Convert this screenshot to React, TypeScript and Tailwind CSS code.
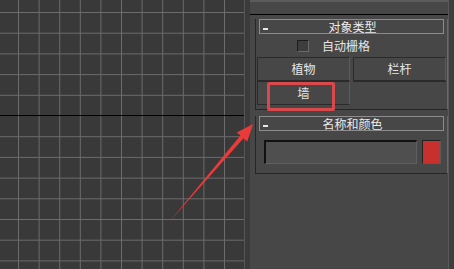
import React from 'react';

// viewport grid: spacing measured off the reference
const vLines = Array.from({ length: 12 }, (_, i) => 18.5 + i * 20.6);
const hLines = Array.from({ length: 13 }, (_, i) => 12.5 + i * 20.7);

const font = "font-['Noto_Sans_CJK_SC','Noto_Sans',sans-serif]";

const RolloutHeader = ({ title }: { title: string }) => (
  <div className="mx-[3px] -mt-[8px] h-[15px] border border-[#8c8c8c] bg-[#474747] flex items-center">
    <div className="w-[5px] h-[2px] bg-[#e6e6e6] ml-[3px] self-end mb-[3px]" />
    <span className="flex-1 text-center text-[12px] leading-none text-[#ececec] pr-[6px]">{title}</span>
  </div>
);

const ToolButton = ({ label }: { label?: string }) => (
  <div className="h-[24px] border border-[#2a2a2a] border-r-[#5a5a5a] border-b-[#2a2a2a] bg-[#474747] flex items-center justify-center text-[12px] text-[#e6e6e6]">
    {label}
  </div>
);

export default function App() {
  return (
    <div className={`w-[454px] h-[269px] flex relative overflow-hidden bg-[#474747] ${font}`}>
      {/* Viewport */}
      <div className="w-[244px] h-full bg-[#393939]">
        <svg width="244" height="269" className="block">
          {vLines.map((x) => (
            <line key={`v${x}`} x1={x} y1={0} x2={x} y2={269} stroke="#6c6c6c" strokeWidth={1} />
          ))}
          {hLines.map((y, i) =>
            i === 5 ? null : <line key={`h${y}`} x1={0} y1={y} x2={244} y2={y} stroke="#6c6c6c" strokeWidth={1} />
          )}
          <line x1={0} y1={115.5} x2={244} y2={115.5} stroke="#000" strokeWidth={1.2} />
        </svg>
      </div>
      <div className="w-[6px] h-full bg-[#3b3b3b] border-l border-[#555555]" />

      {/* Command panel */}
      <div className="w-[198px] h-full flex flex-col">
        <div className="h-[14px] border-t-2 border-[#5c5c5c]" />
        <div className="border-t border-black">
          {/* Object Type rollout */}
          <div className="mt-[12px] ml-[5px] w-[193px] border-l border-b border-r border-[#262626] border-r-[#6a6a6a] pb-[4px]">
            <RolloutHeader title="对象类型" />
            <div className="mt-[5px] h-[13px] pl-[41px] flex items-center gap-[13px]">
              <div className="w-[12px] h-[12px] border border-[#1c1c1c] border-r-[#6a6a6a] border-b-[#6a6a6a] bg-[#3d3d3d]" />
              <span className="text-[12px] leading-none text-[#e6e6e6]">自动栅格</span>
            </div>
            <div className="mt-[5px] px-[1px] grid grid-cols-2 gap-x-[3px]">
              <ToolButton label="植物" />
              <ToolButton label="栏杆" />
              <ToolButton label="墙" />
              <div className="h-[24px] border-t border-[#2a2a2a]" />
            </div>
          </div>

          {/* Name and Color rollout */}
          <div className="mt-[14px] ml-[5px] w-[193px] border-l border-b border-r border-[#262626] border-r-[#6a6a6a] pb-[9px]">
            <RolloutHeader title="名称和颜色" />
            <div className="mt-[9px] ml-[8px] flex gap-[5px]">
              <div className="w-[153px] h-[24px] border-t-2 border-l-2 border-b border-r border-[#111111] border-b-[#5e5e5e] border-r-[#5e5e5e] bg-[#4f4f4f]" />
              <div className="w-[19px] h-[24px] border border-[#222222] border-b-[#5a5a5a] border-r-[#5a5a5a] bg-[#c8302e]" />
            </div>
          </div>
        </div>
      </div>
      <div className="w-[6px] h-full bg-[#3e3e3e] border-l border-[#5a5a5a]" />

      {/* annotation: highlight box */}
      <div className="absolute left-[267px] top-[82px] w-[68px] h-[29px] border-[3px] border-[#d9484a] rounded-[2px] pointer-events-none" />

      {/* annotation: arrow */}
      <svg width="454" height="269" className="absolute inset-0 pointer-events-none">
        <polygon
          points="253,124 247.3,141.4 243.6,138.3 170,221 240.4,135.6 236.7,132.4"
          fill="#ea3a3a"
        />
      </svg>
    </div>
  );
}
